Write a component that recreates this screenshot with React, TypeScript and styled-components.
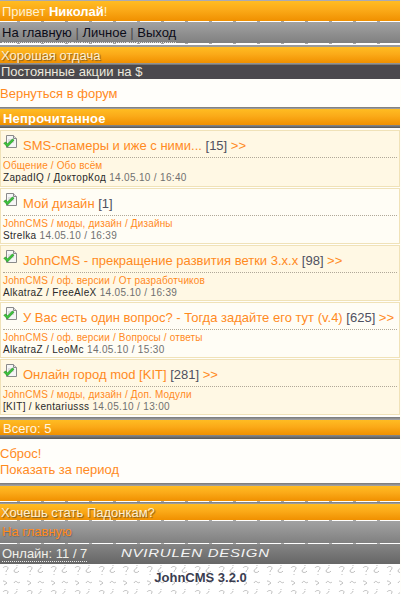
import React from "react";
import styled, { createGlobalStyle } from "styled-components";

const tile = encodeURIComponent(
  `<svg xmlns="http://www.w3.org/2000/svg" width="24" height="24"><g fill="none" stroke="#bdbdbd" stroke-width="1"><path d="M3 4c1-2 5-2 5 0 0 2-2 2-2 4M6 10v1"/><path d="M17 1v1M17 3c0 2-3 2-3 4 0 2 4 2 5 0"/><path d="M3 17c2 0 3 1 4 2l-3 2"/><path d="M14 19c1-2 2-2 3-1s2 1 3 0"/></g></svg>`
);

const Global = createGlobalStyle`
  html, body { margin: 0; padding: 0; background: #fffefa; }
  body { font-family: "Liberation Sans", Arial, sans-serif; font-size: 13px; width: 401px; overflow: hidden; }
`;

const Page = styled.div`
  width: 400px;
  height: 594px;
  display: flex;
  flex-direction: column;
  overflow: hidden;
  & > * { flex: none; }
`;

const orange = "linear-gradient(180deg, #ffbc22 0%, #fbaa18 45%, #f09000 100%)";
const dashes = "repeating-linear-gradient(90deg, #ffffff 0 17px, #a8a8a8 17px 20px, #ffffff 20px 24px)";

const Greeting = styled.div`
  height: 20px;
  border-top: 1px solid #a9aab3;
  background: ${orange};
  color: #fff0d0;
  line-height: 22px;
  padding-left: 2px;
  b { color: #fff; font-weight: bold; }
`;

const DashLine = styled.div`
  height: 1px;
  background: ${dashes};
`;

const GreyBar = styled.div<{ $h: number }>`
  height: ${(p) => p.$h}px;
  line-height: ${(p) => p.$h}px;
  padding-left: 2px;
  background: linear-gradient(180deg, #a2a2a2, #808080);
`;

const NavLink = styled.span`
  color: #0c0c18;
  border-bottom: 1px dotted #e0e0e0;
  padding-bottom: 2px;
`;

const NavSep = styled.span`
  color: #4a4a4a;
  border-bottom: 1px dotted #e0e0e0;
  padding-bottom: 2px;
`;

const Cap = styled.div<{ $h?: number; $fill?: string }>`
  height: ${(p) => p.$h ?? 2}px;
  background: ${(p) => p.$fill || "linear-gradient(180deg, #777, #a8a8a8)"};
`;

const OrangeBar = styled.div<{ $h: number; $pad?: number; $drop?: number }>`
  height: ${(p) => p.$h}px;
  line-height: ${(p) => p.$h + 2 * (p.$drop ?? 1)}px;
  padding-left: ${(p) => p.$pad ?? 1}px;
  background: ${orange};
`;

const Promo = styled.span`
  color: #fff0d0;
  text-shadow: 1px 1px 1px #7a5a20;
  border-bottom: 1px dotted #fff;
`;

const ActionBar = styled.div`
  height: 14px;
  line-height: 14px;
  background: #4b494e;
  padding-left: 1px;
`;

const ActionText = styled.span`
  color: #ece8dc;
  border-bottom: 1px dotted #fff;
`;

const Block = styled.div<{ $h: number }>`
  height: ${(p) => p.$h}px;
  box-sizing: border-box;
  padding-top: 2px;
  background: #fffefa;
  display: flex;
  flex-direction: column;
  justify-content: center;
`;

const OrangeLink = styled.a`
  color: #ff8a1e;
  line-height: 16px;
  display: block;
`;

const Heading = styled.span`
  color: #fff;
  font-weight: bold;
  letter-spacing: 0.2px;
`;

const Total = styled.span`
  color: #fff6e0;
`;

const Cards = styled.div`
  display: flex;
  flex-direction: column;
  gap: 1px;
  padding: 2px 0;
`;

const Card = styled.div<{ $alt: boolean; $h: number }>`
  height: ${(p) => p.$h}px;
  box-sizing: border-box;
  border: 1px solid #f0e2b8;
  background: ${(p) => (p.$alt ? "#fffdf5" : "#fff8e4")};
  padding: 4px 2px 0 2px;
`;

const TitleRow = styled.div`
  display: flex;
  align-items: flex-start;
  height: 22px;
  border-bottom: 1px dotted #b0a898;
  white-space: nowrap;
`;

const TitleText = styled.div`
  margin-left: 4px;
  padding-top: 3px;
  line-height: 16px;
`;

const TitleLink = styled.span`
  color: #ff8a1e;
`;

const Count = styled.span`
  color: #4f5060;
`;

const Crumbs = styled.div`
  color: #ff8a1e;
  font-size: 10px;
  line-height: 12px;
  margin-top: 2px;
  letter-spacing: 0.15px;
  white-space: nowrap;
`;

const Meta = styled.div`
  font-size: 10px;
  line-height: 12px;
  margin-top: 0;
  color: #2a2a2a;
  letter-spacing: 0.33px;
  white-space: nowrap;
`;

const Stamp = styled.span`
  color: #707070;
`;

const MainLink = styled.span`
  color: #ff8a1e;
  text-shadow: 1px 1px 1px #6a6a6a;
`;

const OnlineRow = styled.div`
  height: 20px;
  background: linear-gradient(180deg, #858585, #666666);
  padding-left: 2px;
  display: flex;
`;

const OnlineText = styled.span`
  color: #f0f0ea;
  height: 17px;
  line-height: 20px;
  border-bottom: 1px dotted #e8e8e8;
`;

const Brand = styled.span`
  margin-left: 34px;
  color: #f4f4f4;
  font-style: italic;
  font-size: 10px;
  line-height: 20px;
  letter-spacing: 0.5px;
  white-space: nowrap;
  transform: scaleX(1.5);
  transform-origin: left center;
`;

const Footer = styled.div`
  flex: 1 0 0 !important;
  width: 401px;
  background-color: #fff;
  background-image: url("data:image/svg+xml,${tile}");
  text-align: center;
  padding-top: 6px;
  color: #3a3c50;
  font-size: 13px;
  font-weight: bold;
  line-height: 16px;
`;

const DocCheck = () => (
  <svg width="16" height="16" viewBox="0 0 16 16" style={{ flex: "none" }}>
    <path d="M3.5 .5h7l3 3v9h-10z" fill="#f6f6f6" stroke="#8a8a8a" />
    <path d="M10.5 .5v3h3" fill="#ddd" stroke="#8a8a8a" />
    <path d="M5 5h6M5 7h6" stroke="#c8c8c8" />
    <path d="M.8 8.2l2 -1.2 1.6 2 5-5 1.6 1.2-6.5 6.8z" fill="#3cc43c" stroke="#1c8a1c" strokeWidth=".6" />
  </svg>
);

const topics = [
  { t: "SMS-спамеры и иже с ними...", c: "[15]", more: true, cr: "Общение / Обо всём", a: "ZapadIQ / ДокторКод", d: "14.05.10 / 16:40", h: 57 },
  { t: "Мой дизайн", c: "[1]", more: false, cr: "JohnCMS / моды, дизайн / Дизайны", a: "Strelka", d: "14.05.10 / 16:39", h: 56 },
  { t: "JohnCMS - прекращение развития ветки 3.x.x", c: "[98]", more: true, cr: "JohnCMS / оф. версии / От разработчиков", a: "AlkatraZ / FreeAleX", d: "14.05.10 / 16:39", h: 56 },
  { t: "У Вас есть один вопрос? - Тогда задайте его тут (v.4)", c: "[625]", more: true, cr: "JohnCMS / оф. версии / Вопросы / ответы", a: "AlkatraZ / LeoMc", d: "14.05.10 / 15:30", h: 56 },
  { t: "Онлайн город mod [KIT]", c: "[281]", more: true, cr: "JohnCMS / моды, дизайн / Доп. Модули", a: "[KIT] / kentariusss", d: "14.05.10 / 13:00", h: 56 },
];

export default function App() {
  return (
    <Page>
      <Global />
      <Greeting>Привет <b>Николай</b>!</Greeting>
      <DashLine />
      <GreyBar $h={21}>
        <NavLink>На главную</NavLink><NavSep> | </NavSep><NavLink>Личное</NavLink><NavSep> | </NavSep><NavLink>Выход</NavLink>
      </GreyBar>
      <DashLine />
      <Cap $h={3} $fill="linear-gradient(180deg, #ffffff 0 33%, #9a9a9a 33%)" />
      <OrangeBar $h={16}><Promo>Хорошая отдача</Promo></OrangeBar>
      <Cap $fill="linear-gradient(180deg, #a0a0a0, #6a6a6a)" />
      <ActionBar><ActionText>Постоянные акции на $</ActionText></ActionBar>
      <Block $h={28}><OrangeLink>Вернуться в форум</OrangeLink></Block>
      <Cap />
      <OrangeBar $h={16} $pad={3} $drop={2}><Heading>Непрочитанное</Heading></OrangeBar>
      <Cap $h={3} $fill="linear-gradient(180deg, #8a8a8a, #555)" />
      <Cards>
        {topics.map((x, i) => (
          <Card key={x.t} $alt={i % 2 === 1} $h={x.h}>
            <TitleRow>
              <DocCheck />
              <TitleText>
                <TitleLink>{x.t}</TitleLink> <Count>{x.c}</Count>
                {x.more && <TitleLink> &gt;&gt;</TitleLink>}
              </TitleText>
            </TitleRow>
            <Crumbs>{x.cr}</Crumbs>
            <Meta>{x.a} <Stamp>{x.d}</Stamp></Meta>
          </Card>
        ))}
      </Cards>
      <Cap $h={3} />
      <OrangeBar $h={15} $pad={3}><Total>Всего: 5</Total></OrangeBar>
      <Cap $h={4} $fill="linear-gradient(180deg, #8a8a8a, #555)" />
      <Block $h={44}>
        <OrangeLink>Сброс!</OrangeLink>
        <OrangeLink>Показать за период</OrangeLink>
      </Block>
      <Cap $h={3} />
      <OrangeBar $h={15} />
      <DashLine />
      <Cap />
      <OrangeBar $h={16}><Promo>Хочешь стать Падонкам?</Promo></OrangeBar>
      <DashLine />
      <GreyBar $h={22}><MainLink>На главную</MainLink></GreyBar>
      <DashLine />
      <OnlineRow>
        <OnlineText>Онлайн: 11 / 7</OnlineText>
        <Brand>NVIRULEN DESIGN</Brand>
      </OnlineRow>
      <Footer>JohnCMS 3.2.0</Footer>
    </Page>
  );
}
